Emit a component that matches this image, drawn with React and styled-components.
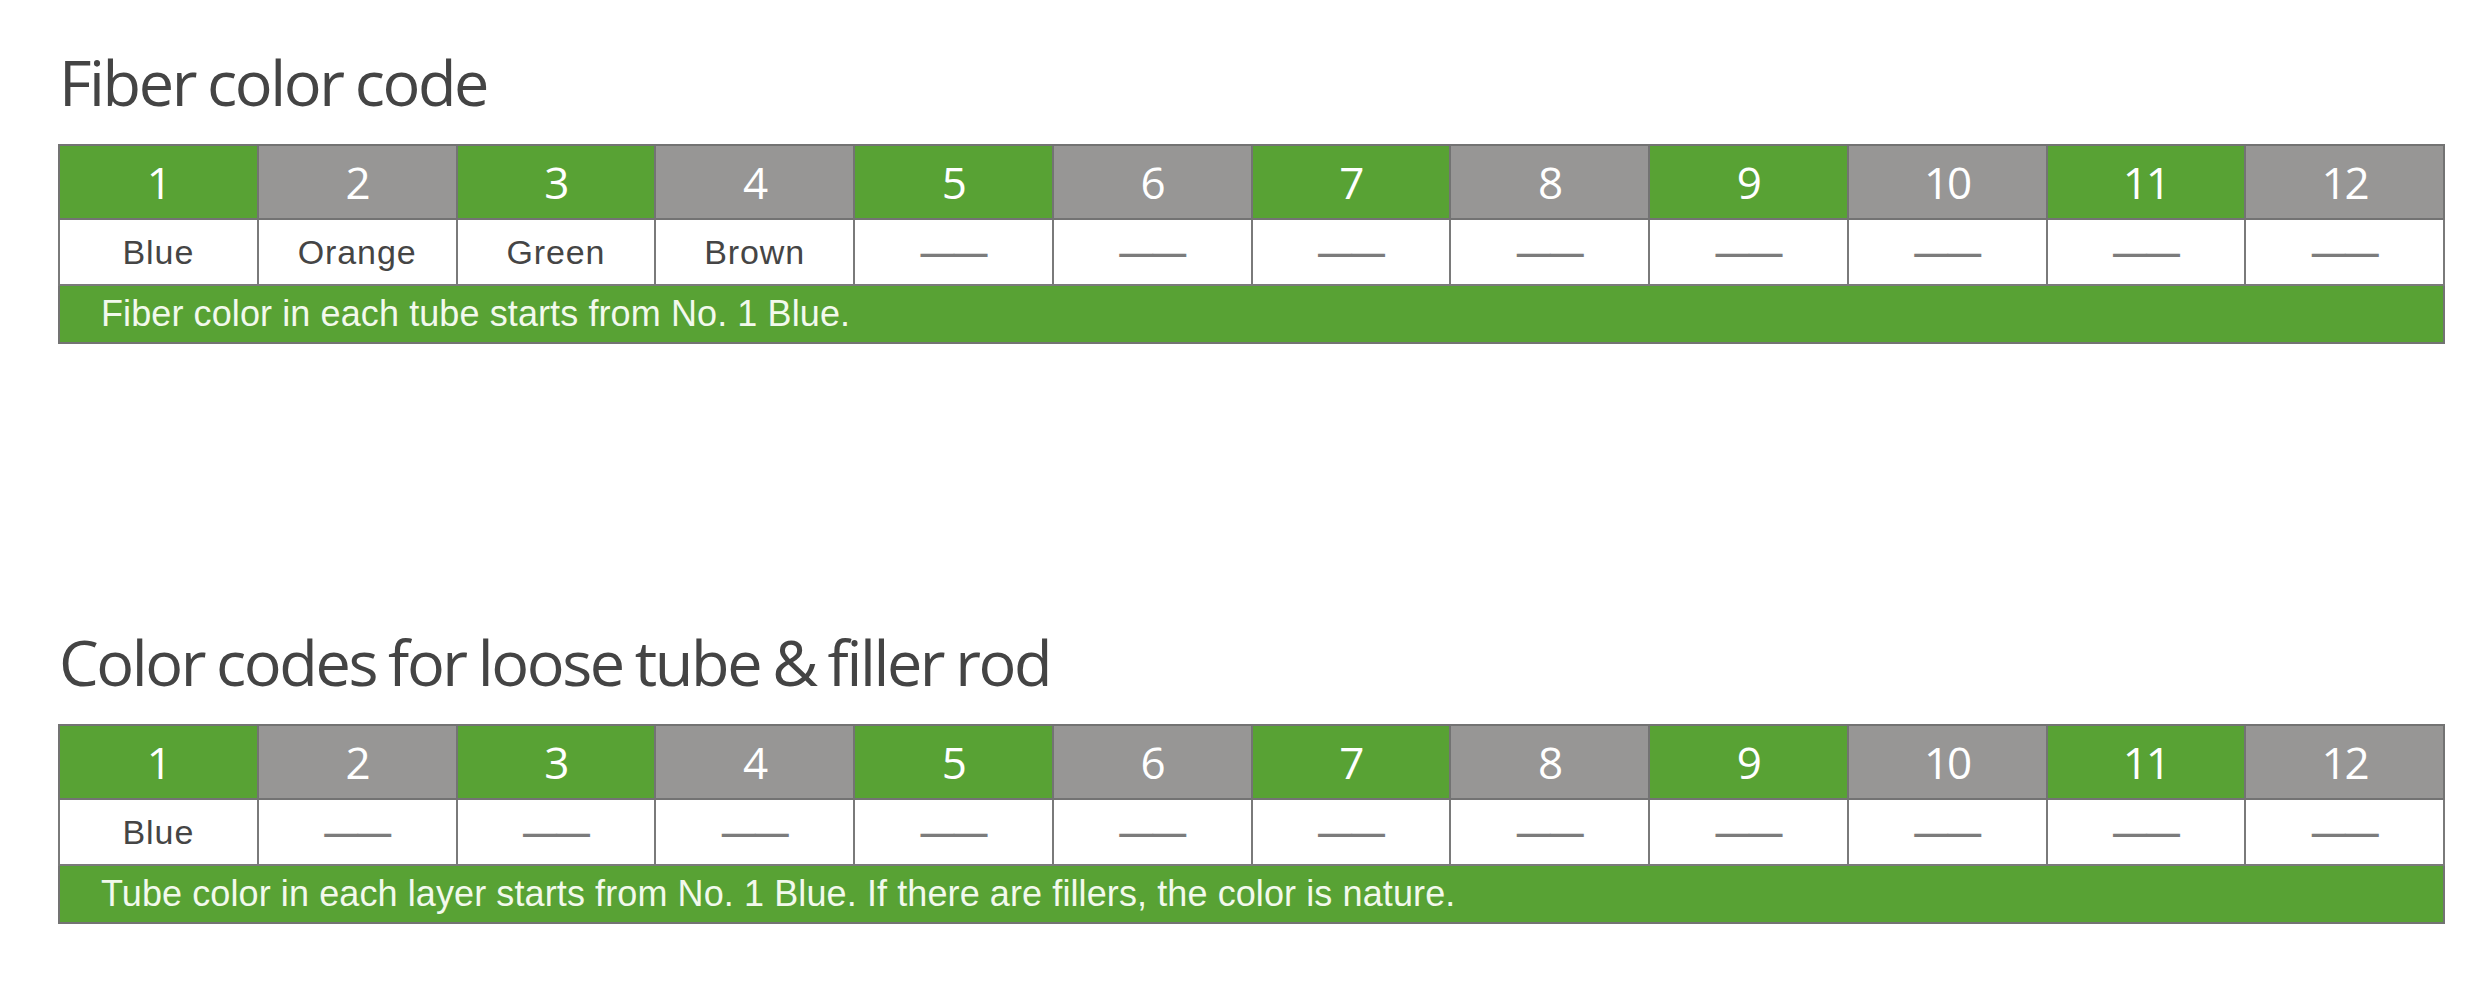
import styled, { createGlobalStyle } from "styled-components";

const GlobalStyle = createGlobalStyle`
  html, body {
    margin: 0;
    padding: 0;
    background: #ffffff;
  }
`;

const fiberColors = ["Blue", "Orange", "Green", "Brown"];
const tubeColors = ["Blue"];

const sections = [
  {
    title: "Fiber color code",
    colors: fiberColors,
    note: "Fiber color in each tube starts from No. 1 Blue.",
  },
  {
    title: "Color codes for loose tube & filler rod",
    colors: tubeColors,
    note: "Tube color in each layer starts from No. 1 Blue. If there are fillers, the color is nature.",
  },
];

const numbers = Array.from({ length: 12 }, (_, i) => i + 1);

const App = () => {
  return (
    <Page>
      <GlobalStyle />
      {sections.map((section) => (
        <Section key={section.title}>
          <Title>{section.title}</Title>
          <Table>
            <tbody>
              <tr>
                {numbers.map((n) => (
                  <NumCell key={n} $green={n % 2 === 1}>
                    {n}
                  </NumCell>
                ))}
              </tr>
              <tr>
                {numbers.map((n) => (
                  <ColorCell key={n}>
                    {section.colors[n - 1] ? section.colors[n - 1] : <Dash>——</Dash>}
                  </ColorCell>
                ))}
              </tr>
              <tr>
                <NoteCell colSpan={12}>{section.note}</NoteCell>
              </tr>
            </tbody>
          </Table>
        </Section>
      ))}
    </Page>
  );
};

const Page = styled.div`
  width: 2480px;
  height: 1008px;
  box-sizing: border-box;
  padding: 50px 35px 0 58px;
  display: flex;
  flex-direction: column;
  gap: 286px;
  background: #ffffff;
`;

const Section = styled.section`
  display: flex;
  flex-direction: column;
  gap: 31px;
`;

const Title = styled.h2`
  margin: 0;
  font-family: "Open Sans", "Noto Sans", sans-serif;
  font-weight: 500;
  font-size: 63px;
  line-height: 1;
  letter-spacing: -2.4px;
  word-spacing: -2px;
  color: #444444;
  padding-left: 1px;
`;

const Table = styled.table`
  width: 2387px;
  border-collapse: collapse;
  table-layout: fixed;
  border: 2px solid #737373;
`;

const NumCell = styled.td`
  height: 72px;
  padding: 0;
  text-align: center;
  vertical-align: middle;
  background: ${(p) => (p.$green ? "#58a234" : "#979695")};
  border: 2px solid #737373;
  color: #ffffff;
  font-family: "Open Sans", "Noto Sans", sans-serif;
  font-size: 44px;
  letter-spacing: -2px;
  line-height: 1;
`;

const ColorCell = styled.td`
  height: 64px;
  padding: 0;
  text-align: center;
  vertical-align: middle;
  background: #ffffff;
  border: 2px solid #7a7a7a;
  color: #454545;
  font-family: "Liberation Sans", Arial, sans-serif;
  font-size: 34px;
  letter-spacing: 0.9px;
  line-height: 1;
`;

const Dash = styled.span`
  color: #7c7c7c;
  font-size: 34px;
  font-weight: 700;
  letter-spacing: -1px;
`;

const NoteCell = styled.td`
  height: 56px;
  padding: 0 0 0 41px;
  text-align: left;
  vertical-align: middle;
  background: #58a234;
  border: 2px solid #737373;
  color: #f2f9ec;
  font-family: "Liberation Sans", Arial, sans-serif;
  font-size: 36px;
  letter-spacing: 0.1px;
  line-height: 1;
`;

export default App;
